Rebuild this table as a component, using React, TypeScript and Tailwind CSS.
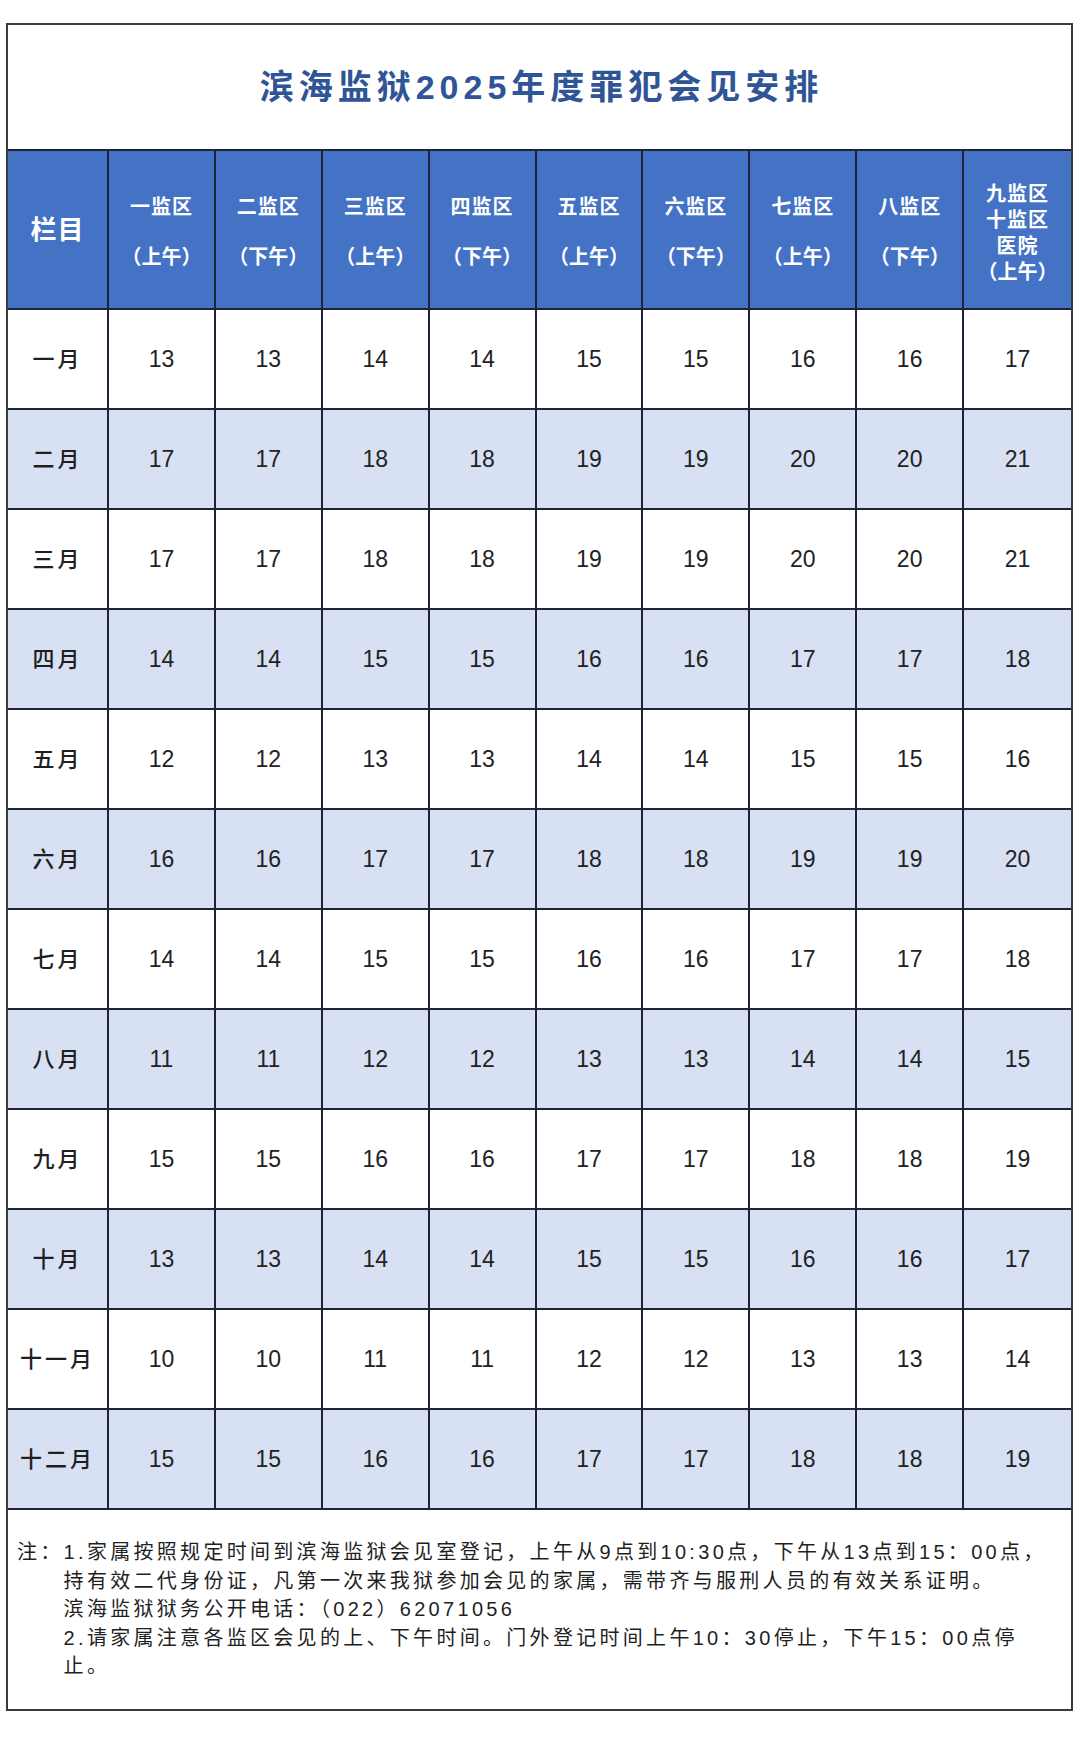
const FONT = "font-['Liberation_Sans','Noto_Sans_CJK_SC',sans-serif]";

const columns = [
  { name: "一监区", time: "（上午）" },
  { name: "二监区", time: "（下午）" },
  { name: "三监区", time: "（上午）" },
  { name: "四监区", time: "（下午）" },
  { name: "五监区", time: "（上午）" },
  { name: "六监区", time: "（下午）" },
  { name: "七监区", time: "（上午）" },
  { name: "八监区", time: "（下午）" },
];

// each month: the first day; the other columns step up by one every two columns
const months: Array<[string, number]> = [
  ["一月", 13],
  ["二月", 17],
  ["三月", 17],
  ["四月", 14],
  ["五月", 12],
  ["六月", 16],
  ["七月", 14],
  ["八月", 11],
  ["九月", 15],
  ["十月", 13],
  ["十一月", 10],
  ["十二月", 15],
];

const offsets = [0, 0, 1, 1, 2, 2, 3, 3, 4];

const HeaderCell = ({ children, last = false }: { children: React.ReactNode; last?: boolean }) => (
  <div
    className={`h-[159px] bg-[#4472c4] border-b-2 border-[#1e2433] flex flex-col items-center justify-center text-white font-bold ${
      last ? "" : "border-r-2"
    }`}
  >
    {children}
  </div>
);

export default function App() {
  return (
    <div className={`w-[1080px] h-[1737px] bg-white pt-[23px] pl-[6px] ${FONT}`}>
      <div className="w-[1067px] border-2 border-[#3a3a3a]">
        <div className="h-[126px] border-b-2 border-[#1e2433] flex items-center justify-center">
          <h1 className="text-[34px] font-bold tracking-[5px] text-[#2f5597] leading-none pl-[4px]">
            滨海监狱2025年度罪犯会见安排
          </h1>
        </div>

        <div className="grid grid-cols-[101px_repeat(9,minmax(0,1fr))]">
          <HeaderCell>
            <span className="text-[26px] tracking-[1px] leading-none">栏目</span>
          </HeaderCell>
          {columns.map((c) => (
            <HeaderCell key={c.name}>
              <span className="text-[20px] tracking-[1px] leading-[24px] mt-[5px]">{c.name}</span>
              <span className="text-[20px] leading-[24px] mt-[26px]">{c.time}</span>
            </HeaderCell>
          ))}
          <HeaderCell last>
            <div className="flex flex-col items-center text-[20px] leading-[26px] tracking-[1px] pt-[6px]">
              <span>九监区</span>
              <span>十监区</span>
              <span>医院</span>
              <span className="text-[20px] tracking-normal">（上午）</span>
            </div>
          </HeaderCell>

          {months.map(([label, base], i) => {
            const bg = i % 2 === 1 ? "bg-[#d8e0f3]" : "bg-white";
            return [
              <div
                key={label}
                className={`h-[100px] border-r-2 border-b-2 border-[#1e2433] flex items-center justify-center text-[22px] font-medium tracking-[3px] text-[#1f1f1f] ${bg}`}
              >
                {label}
              </div>,
              ...offsets.map((o, j) => (
                <div
                  key={label + j}
                  className={`h-[100px] border-b-2 border-[#1e2433] flex items-center justify-center text-[23px] text-[#222] ${
                    j === 8 ? "" : "border-r-2"
                  } ${bg}`}
                >
                  {base + o}
                </div>
              )),
            ];
          })}
        </div>

        <div className="h-[199px] flex items-center pl-[9px] text-[20px] leading-[28.5px] tracking-[3.3px] text-[#1f1f1f]">
          <div className="flex">
            <span className="whitespace-nowrap">注：</span>
            <div className="flex flex-col whitespace-nowrap">
              <span>1.家属按照规定时间到滨海监狱会见室登记，上午从9点到10:30点，下午从13点到15：00点，</span>
              <span>持有效二代身份证，凡第一次来我狱参加会见的家属，需带齐与服刑人员的有效关系证明。</span>
              <span>滨海监狱狱务公开电话：（022）62071056</span>
              <span>2.请家属注意各监区会见的上、下午时间。门外登记时间上午10：30停止，下午15：00点停</span>
              <span>止。</span>
            </div>
          </div>
        </div>
      </div>
    </div>
  );
}
